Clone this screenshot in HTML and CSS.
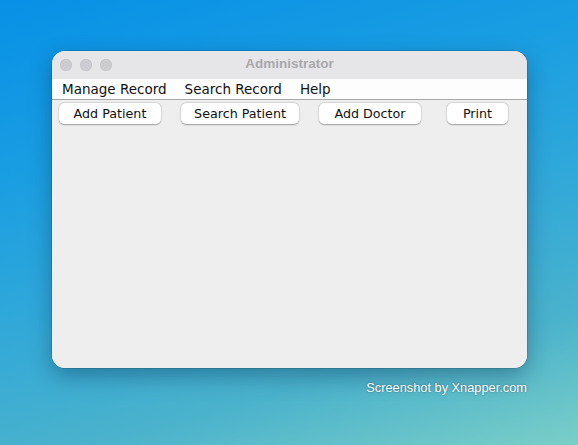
FILE: index.html
```html
<!DOCTYPE html>
<html>
<head>
<meta charset="utf-8">
<link rel="stylesheet" href="styles.css">
</head>
<body>
<div class="stage">
  <div class="window">
    <div class="titlebar">
      <div class="lights">
        <span class="light"></span><span class="light"></span><span class="light"></span>
      </div>
      <div class="title">Administrator</div>
    </div>
    <div class="menubar">
      <span class="menu">Manage Record</span>
      <span class="menu">Search Record</span>
      <span class="menu">Help</span>
    </div>
    <div class="content">
      <div class="toolbar">
        <button class="btn b1">Add Patient</button>
        <button class="btn b2">Search Patient</button>
        <button class="btn b3">Add Doctor</button>
        <button class="btn b4">Print</button>
      </div>
    </div>
  </div>
  <div class="credit">Screenshot by Xnapper.com</div>
</div>
</body>
</html>
```
FILE: styles.css
```css
html, body {
  margin: 0;
  padding: 0;
}
body {
  width: 578px;
  height: 445px;
  overflow: hidden;
  background: linear-gradient(165deg, #0790e6 0%, #1a9ee2 30%, #2ea7da 52%, #4ab2cc 78%, #7acec7 100%);
  font-family: "DejaVu Sans", sans-serif;
}
.stage {
  display: flex;
  flex-direction: column;
  padding: 51px 0 0 52px;
}
.window {
  width: 475px;
  height: 317px;
  background: #eeeeee;
  border-radius: 13px;
  overflow: hidden;
  display: flex;
  flex-direction: column;
  box-shadow: 0 8px 22px rgba(0, 30, 60, 0.35), 0 0 0 0.5px rgba(0,0,0,0.25);
}
.titlebar {
  height: 28px;
  background: #e6e5e8;
  display: flex;
  align-items: center;
  position: relative;
}
.lights {
  display: flex;
  gap: 8px;
  padding-left: 8px;
}
.light {
  width: 12px;
  height: 12px;
  border-radius: 50%;
  background: #cdccd0;
  box-shadow: inset 0 0 0 0.5px #c2c1c5;
}
.title {
  position: absolute;
  left: 0;
  right: 0;
  text-align: center;
  font-family: "Liberation Sans", sans-serif;
  font-weight: bold;
  font-size: 13.5px;
  color: #a9a8ab;
  top: 5px;
}
.menubar {
  height: 20px;
  background: #fdfdfd;
  border-bottom: 1px solid #a9a9a9;
  display: flex;
  align-items: center;
  padding-left: 10px;
  gap: 18px;
  font-size: 13.5px;
  color: #111;
}
.content {
  flex: 1;
  background: #eeeeee;
}
.toolbar {
  display: flex;
  padding: 3px 0 0 7px;
}
.btn {
  height: 21px;
  background: #ffffff;
  border: none;
  border-radius: 5px;
  box-shadow: 0 0.5px 1.5px rgba(0,0,0,0.3), 0 0 0 0.5px rgba(0,0,0,0.08);
  font-family: "DejaVu Sans", sans-serif;
  font-size: 12.7px;
  color: #111;
  padding: 0;
}
.b1 { width: 102px; }
.b2 { width: 118px; margin-left: 20px; }
.b3 { width: 102px; margin-left: 20px; }
.b4 { width: 61px; margin-left: 26px; }
.credit {
  width: 475px;
  text-align: right;
  margin-top: 12px;
  font-family: "Liberation Sans", sans-serif;
  font-size: 12.8px;
  color: #ffffff;
  text-shadow: 0 0 2px rgba(0,0,0,0.5);
}
```
